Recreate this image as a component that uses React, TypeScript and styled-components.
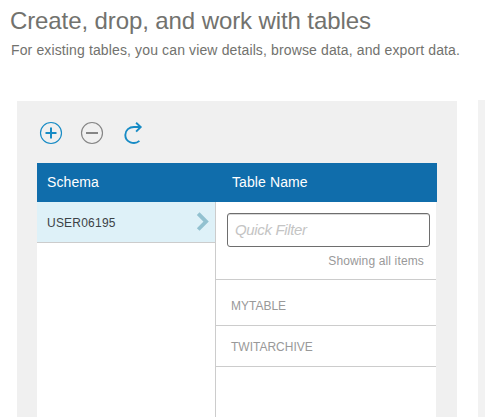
import React from "react";
import styled, { createGlobalStyle } from "styled-components";

const GlobalStyle = createGlobalStyle`
  * { box-sizing: border-box; }
  html, body { margin: 0; background: #fff; overflow: hidden; }
  body { font-family: "Liberation Sans", Arial, Helvetica, sans-serif; }
`;

const Page = styled.main`
  display: flex;
  flex-direction: column;
  height: 417px;
  overflow: hidden;
`;

const Intro = styled.header`
  flex: none;
  height: 100px;
  padding: 6px 0 0 10px;
  color: #72726e;
  white-space: nowrap;
`;

const Title = styled.h1`
  margin: 0;
  font-size: 24px;
  line-height: 30px;
  font-weight: 400;
  letter-spacing: -0.1px;
`;

const Subtitle = styled.p`
  margin: 5px 0 0 1px;
  font-size: 14px;
  line-height: 18px;
  letter-spacing: 0.13px;
`;

const Workspace = styled.div`
  display: flex;
  flex: 1;
  gap: 21px;
  padding-left: 17px;
`;

const Panel = styled.section`
  display: flex;
  flex-direction: column;
  width: 440px;
  margin-top: 1px;
  padding: 0 20px;
  background: #f0f0f0;
`;

const NextPanel = styled.section`
  width: 7px;
  background: #f2f2f2;
`;

const Toolbar = styled.div`
  display: flex;
  gap: 17px;
  height: 62px;
  padding: 20px 0 0 2px;
`;

const IconButton = styled.button<{ $color: string }>`
  display: block;
  width: 24px;
  height: 24px;
  padding: 0;
  border: 0;
  background: none;
  color: ${(p) => p.$color};

  svg { display: block; }
`;

const HeaderRow = styled.div`
  display: grid;
  grid-template-columns: 185px 1fr;
  align-items: center;
  height: 39px;
  padding: 0 0 2px 10px;
  background: #106dab;
  color: #fff;
  font-size: 14px;
`;

const ColumnTitle = styled.span`
  letter-spacing: 0.1px;
`;

const Columns = styled.div`
  display: grid;
  grid-template-columns: 178px 1fr;
  flex: 1;
  width: 399px;
  background: #fff;
`;

const SchemaItem = styled.div`
  display: flex;
  align-items: center;
  justify-content: space-between;
  height: 41px;
  padding: 0 5px 0 10px;
  border-bottom: 1px solid #ccc;
  background: #def1f8;
  color: #3b4246;
  font-size: 12px;

  svg { display: block; }
`;

const SchemaName = styled.span`
  padding-top: 2px;
  letter-spacing: 0.22px;
`;

const TableColumn = styled.div`
  border-left: 1px solid #ccc;
`;

const FilterArea = styled.div`
  height: 78px;
  padding: 11px 6px 0 11px;
  border-bottom: 1px solid #ccc;
`;

const FilterInput = styled.input`
  display: block;
  width: 203px;
  height: 34px;
  padding: 0 7px 2px;
  border: 1px solid #6e6e6e;
  border-radius: 3px;
  outline: none;
  background: #fff;
  box-shadow: inset 0 1px 0 #d9d9d9;
  font: italic 15px "Liberation Sans", Arial, sans-serif;
  letter-spacing: -0.34px;

  &::placeholder { color: #c4c4c4; opacity: 1; }
`;

const Status = styled.div`
  margin-top: 6px;
  padding-right: 6px;
  color: #999;
  font-size: 12px;
  line-height: 16px;
  letter-spacing: 0.14px;
  text-align: right;
`;

const TableItem = styled.div<{ $first?: boolean }>`
  display: flex;
  align-items: center;
  height: ${(p) => (p.$first ? 46 : 41)}px;
  padding: ${(p) => (p.$first ? 7 : 2)}px 15px 0;
  border-bottom: 1px solid #ccc;
  color: #999;
  font-size: 12px;
`;

const tables = ["MYTABLE", "TWITARCHIVE"];

const AddIcon = () => (
  <svg width="24" height="24" viewBox="0 0 24 24" fill="none" stroke="currentColor">
    <circle cx="12" cy="12" r="10.5" strokeWidth="1.15" />
    <path d="M6.5 12h11M12 6.5v11" strokeWidth="2" />
  </svg>
);

const RemoveIcon = () => (
  <svg width="24" height="24" viewBox="0 0 24 24" fill="none" stroke="currentColor">
    <circle cx="12" cy="12" r="10.5" strokeWidth="1.15" />
    <path d="M6 12h12" strokeWidth="2" />
  </svg>
);

const RefreshIcon = () => (
  <svg width="24" height="24" viewBox="0 0 24 24" fill="none" stroke="currentColor" strokeWidth="1.9">
    <path d="M18.4 19.9C13.3 24.4 4.3 21.2 4.3 14c0-5 4-8 8.7-8h6.5" />
    <path d="m15.1 1.7 4.6 4.3-4.6 4.6" />
  </svg>
);

const ChevronIcon = () => (
  <svg width="14" height="20" viewBox="0 0 14 20" fill="none" stroke="#92c1d0" strokeWidth="3.8">
    <path d="m2.2 1.7 7.9 7.9-7.9 7.9" />
  </svg>
);

export default function App() {
  return (
    <>
      <GlobalStyle />
      <Page>
        <Intro>
          <Title>Create, drop, and work with tables</Title>
          <Subtitle>For existing tables, you can view details, browse data, and export data.</Subtitle>
        </Intro>
        <Workspace>
          <Panel>
            <Toolbar>
              <IconButton $color="#178bc5" aria-label="Create table"><AddIcon /></IconButton>
              <IconButton $color="#858585" aria-label="Drop table"><RemoveIcon /></IconButton>
              <IconButton $color="#178bc5" aria-label="Refresh"><RefreshIcon /></IconButton>
            </Toolbar>
            <HeaderRow>
              <ColumnTitle>Schema</ColumnTitle>
              <ColumnTitle>Table Name</ColumnTitle>
            </HeaderRow>
            <Columns>
              <div>
                <SchemaItem>
                  <SchemaName>USER06195</SchemaName>
                  <ChevronIcon />
                </SchemaItem>
              </div>
              <TableColumn>
                <FilterArea>
                  <FilterInput placeholder="Quick Filter" aria-label="Quick Filter" />
                  <Status>Showing all items</Status>
                </FilterArea>
                {tables.map((name, index) => (
                  <TableItem key={name} $first={index === 0}>{name}</TableItem>
                ))}
              </TableColumn>
            </Columns>
          </Panel>
          <NextPanel />
        </Workspace>
      </Page>
    </>
  );
}
